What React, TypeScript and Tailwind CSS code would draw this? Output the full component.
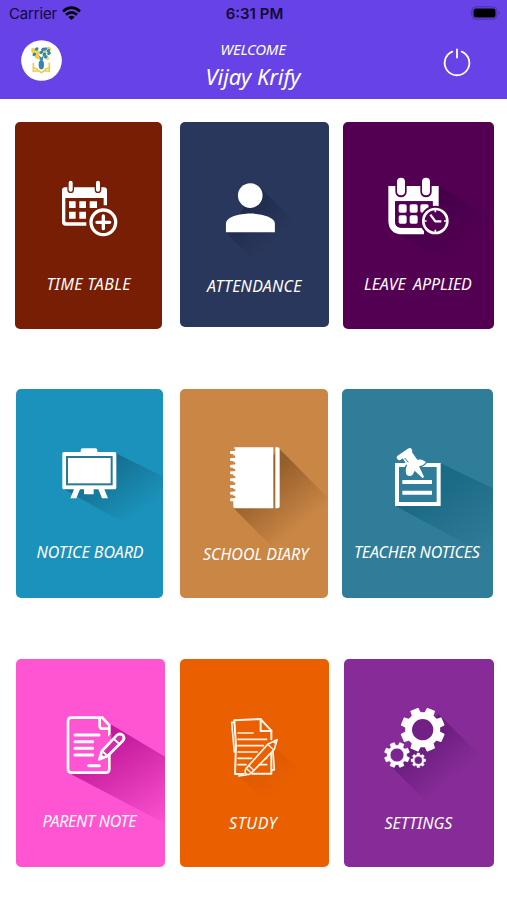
import type { ReactNode } from "react";

type Tile = {
  label: string;
  card: string;
  text: string;
  viewBox: string;
  art: ReactNode;
};

type GearProps = {
  cx: number;
  cy: number;
  outer: number;
  root: number;
  hole: number;
  turn?: number;
};

function Gear({ cx, cy, outer, root, hole, turn = 0 }: GearProps) {
  const teeth = 8;
  const at = (radius: number, angle: number) => {
    const rad = ((angle + turn) * Math.PI) / 180;
    return `${(cx + radius * Math.cos(rad)).toFixed(1)} ${(cy + radius * Math.sin(rad)).toFixed(1)}`;
  };

  const points: string[] = [];
  for (let i = 0; i < teeth; i++) {
    const mid = (360 / teeth) * i;
    points.push(at(root, mid - 14), at(outer, mid - 10), at(outer, mid + 10), at(root, mid + 14));
  }

  const ring = `M${cx - hole} ${cy}a${hole} ${hole} 0 1 0 ${hole * 2} 0a${hole} ${hole} 0 1 0 ${-hole * 2} 0Z`;

  return (
    <path
      d={`M${points.join("L")}Z${ring}`}
      fill="white"
      fillRule="evenodd"
      stroke="white"
      strokeWidth={outer / 16}
      strokeLinejoin="round"
    />
  );
}

type ShadeProps = {
  id: string;
  points: string;
  color: string;
  from: [number, number];
  to: [number, number];
  opacity?: number;
};

// long shadow that fades out between two points of the card
function Shade({ id, points, color, from, to, opacity = 1 }: ShadeProps) {
  return (
    <>
      <defs>
        <linearGradient id={id} gradientUnits="userSpaceOnUse" x1={from[0]} y1={from[1]} x2={to[0]} y2={to[1]}>
          <stop offset="0" stopColor={color} stopOpacity={opacity} />
          <stop offset="1" stopColor={color} stopOpacity="0" />
        </linearGradient>
      </defs>
      <polygon points={points} fill={`url(#${id})`} />
    </>
  );
}

const timeTable = (
  <>
    <path d="M170 216H287Q296 216 296 225V270H286V248H171V317Q171 321 175 321H234V331H172Q161 331 161 320V225Q161 216 170 216Z" fill="white" />
    {[187, 269].map((x) => (
      <rect key={x} x={x - 8} y="194" width="16" height="37" rx="8" fill="white" stroke="#771e04" strokeWidth="4" />
    ))}
    <path d="M182 258h20v20h-20zM213 258h20v20h-20zM244 258h22v20h-22zM182 289h20v21h-20zM213 289h20v21h-20z" fill="white" />
    <circle cx="285" cy="321" r="47" fill="#771e04" />
    <circle cx="285" cy="321" r="37" fill="none" stroke="white" strokeWidth="10" />
    <path d="M285 302V340M266 321H304" stroke="white" strokeWidth="10" strokeLinecap="round" />
  </>
);

const attendance = (
  <>
    <Shade id="attendance" points="262,215 400,350 345,480 290,480 162,352 200,300" color="#1c2748" opacity={0.7} from={[235, 280]} to={[320, 365]} />
    <circle cx="235" cy="241" r="37" fill="white" />
    <path d="M162 351V325C162 306 202 295 235 295S309 306 309 325V351Z" fill="white" />
  </>
);

const leaveApplied = (
  <>
    <Shade id="leave" points="308,212 473,305 473,500 440,490 180,353" color="#3c0042" opacity={0.7} from={[250, 250]} to={[400, 400]} />
    <path d="M158 212H309V300H291V258H178V318Q178 337 197 337H265V357H191Q158 351 158 315Z" fill="white" />
    {[196, 271].map((x) => (
      <g key={x}>
        <path d={`M${x - 17} 211V229a17 17 0 0 0 34 0V211Z`} fill="#530053" />
        <rect x={x - 12} y="187" width="24" height="53" rx="12" fill="white" />
      </g>
    ))}
    <path d="M178 258H291V320H265V337H197Q178 337 178 318Z" fill="#530053" />
    <g fill="white">
      <rect x="189" y="267" width="24" height="25" rx="5" />
      <rect x="222" y="267" width="24" height="25" rx="5" />
      <rect x="254" y="267" width="25" height="25" rx="5" />
      <rect x="189" y="300" width="24" height="25" rx="5" />
      <rect x="222" y="300" width="24" height="25" rx="5" />
    </g>
    <circle cx="299" cy="317" r="46" fill="#530053" />
    <circle cx="299" cy="317" r="36" fill="none" stroke="white" strokeWidth="8" />
    <path d="M299 284V291M299 343V350M266 317H273M325 317H332" stroke="white" strokeWidth="5" />
    <path d="M284 298L299 318H317" fill="none" stroke="white" strokeWidth="7" strokeLinejoin="round" />
  </>
);

const noticeBoard = (
  <>
    <Shade id="board" points="323,210 465,280 465,460 420,460 162,315" color="#136585" opacity={0.85} from={[250, 250]} to={[365, 410]} />
    <path d="M217 206V200Q217 195 223 195H261Q267 195 267 200V206H319Q324 206 324 211V313Q324 318 319 318H288L299 345H281L270 318H256V333H227V318H215L204 345H186L197 318H167Q162 318 162 313V211Q162 206 167 206Z" fill="white" />
    <rect x="176" y="221" width="134" height="82" fill="white" stroke="#267a96" strokeWidth="6" />
  </>
);

const schoolDiary = (
  <>
    <Shade id="diary" points="320,194 465,340 465,560 370,560 188,378" color="#8c5826" opacity={0.85} from={[270, 290]} to={[385, 430]} />
    <path d="M190 192H304V375H190Q184 375 184 369V198Q184 192 190 192Z" fill="white" />
    <path d="M310 192H317Q323 192 323 198V369Q323 375 317 375H310Z" fill="white" />
    {[208, 229, 249, 269, 290, 310, 330, 350].map((y) => (
      <g key={y}>
        <circle cx="186" cy={y - 9} r="4" fill="#ca8645" />
        <rect x="174" y={y - 5} width="16" height="9" rx="4" fill="white" />
      </g>
    ))}
  </>
);

const teacherNotices = (
  <>
    <Shade id="teacher" points="314,240 470,315 470,525 178,368" color="#176680" opacity={0.8} from={[310, 320]} to={[440, 520]} />
    <rect x="183" y="245" width="125" height="117" fill="#307d9a" stroke="white" strokeWidth="12" />
    <path d="M199 296H288M199 328H288" stroke="white" strokeWidth="12" />
    <path d="M211 250Q228 226 258 229L270 236Q262 247 249 249L264 280L260 285L236 262L230 274Q222 281 213 276Q207 268 211 250Z" fill="white" stroke="#307d9a" strokeWidth="8" paintOrder="stroke" />
    <path d="M199 222L227 205L246 232L217 254Z" fill="white" />
    <path d="M190 223L221 202" stroke="white" strokeWidth="15" strokeLinecap="round" />
    <path d="M206 224L217 237" stroke="#307d9a" strokeWidth="3" />
  </>
);

const parentNote = (
  <>
    <Shade id="parent" points="306,217 470,315 470,515 190,368" color="#bd1496" opacity={0.9} from={[290, 280]} to={[450, 540]} />
    <path d="M188 197H281L302 220V351Q302 362 291 362H189Q178 362 178 351V207Q178 197 188 197Z" fill="#ff55d2" stroke="white" strokeWidth="8" />
    <path d="M273 198V222Q273 230 281 230H302" fill="none" stroke="white" strokeWidth="8" />
    <path d="M199 249H271M199 269H252M199 289H252M199 309H252M240 341H272" stroke="white" strokeWidth="9" strokeLinecap="round" />
    <path d="M298 262L302 258V304L298 308Z" fill="#ff55d2" stroke="#ff55d2" strokeWidth="12" />
    <path d="M272 322L280 297L324 250Q334 242 343 250Q350 259 342 267L297 312Z" fill="#d42dab" stroke="white" strokeWidth="8" strokeLinejoin="round" />
    <path d="M315 260L333 277M280 297L297 312" stroke="white" strokeWidth="6" />
    <path d="M272 322L276 308L286 316Z" fill="white" stroke="white" strokeWidth="4" />
  </>
);

const study = (
  <>
    <Shade id="study" points="300,280 430,390 400,470 300,470 200,372" color="#c94f00" opacity={0.4} from={[250, 330]} to={[320, 420]} />
    <path d="M187 205L265 201L298 236V365H190Z" fill="#ea6000" />
    <g fill="none" stroke="#fff4ea" strokeWidth="6" strokeLinejoin="round" strokeLinecap="round">
      <path d="M298 292V365H240M215 366H189L192 280L187 205L265 201L298 236V262" />
      <path d="M266 202V237H298" />
      <path d="M186 211H179L187 300M302 286L307 353L300 355M200 372L222 369" strokeWidth="5" />
      <path d="M198 243H243M198 262H284M198 281H274M198 300H256M198 319H239M198 338H222M270 319H284M253 338H284" strokeWidth="5" />
      <path d="M222 350L287 277L315 263L307 292L238 363Q227 373 220 363Q218 356 222 350Z" fill="#ea6000" strokeWidth="5" />
      <path d="M287 277L303 292M224 350L238 363M232 342L245 355" strokeWidth="4" />
      <path d="M315 263L303 269L309 274Z" fill="#fff4ea" strokeWidth="3" />
    </g>
  </>
);

const settings = (
  <>
    <Shade id="settings" points="305,185 440,320 440,480 300,480 165,345" color="#5c1770" opacity={0.7} from={[240, 280]} to={[335, 390]} />
    <circle cx="258" cy="233" r="35" fill="#722084" />
    <Gear cx={258} cy={233} outer={65} root={51} hole={34} turn={22.5} />
    <circle cx="181" cy="309" r="22" fill="#7c248f" />
    <Gear cx={181} cy={309} outer={38} root={29} hole={21} turn={22.5} />
    <Gear cx={245} cy={325} outer={22} root={17} hole={12} />
  </>
);

const rows: { className: string; tiles: Tile[] }[] = [
  {
    className: "h-[267px]",
    tiles: [
      { label: "TIME TABLE", card: "ml-[14.5px] w-[147.5px] h-[207px] bg-[#771e04]", text: "pl-[32px] tracking-[0.35px]", viewBox: "20 20 442 450", art: timeTable },
      { label: "ATTENDANCE", card: "ml-[18px] w-[148.5px] h-[204.5px] bg-[#2a375c]", text: "pl-[27px] pt-[1.5px] tracking-[0.25px]", viewBox: "24 20 446 450", art: attendance },
      { label: "LEAVE APPLIED", card: "ml-[14.5px] w-[150.5px] h-[207px] bg-[#530053]", text: "pl-[21px] [word-spacing:3px]", viewBox: "22 20 451 450", art: leaveApplied },
    ],
  },
  {
    className: "h-[270px]",
    tiles: [
      { label: "NOTICE BOARD", card: "ml-[15.5px] w-[147.5px] h-[209px] bg-[#1b92bb]", text: "pl-[21px] pt-px", viewBox: "23 17 442 450", art: noticeBoard },
      { label: "SCHOOL DIARY", card: "ml-[17px] w-[147.5px] h-[209px] bg-[#ca8645]", text: "pl-[23px] pt-[2.5px]", viewBox: "24 17 442 450", art: schoolDiary },
      { label: "TEACHER NOTICES", card: "ml-[14.5px] w-[150.5px] h-[209px] bg-[#307d9a]", text: "pl-[12px] pt-px tracking-[-0.15px]", viewBox: "18 17 451 450", art: teacherNotices },
    ],
  },
  {
    className: "h-[208px]",
    tiles: [
      { label: "PARENT NOTE", card: "ml-[15.5px] w-[149px] h-[208px] bg-[#ff55d2]", text: "pl-[27px] tracking-[-0.28px]", viewBox: "22 21 447 450", art: parentNote },
      { label: "STUDY", card: "ml-[15.5px] w-[149px] h-[208px] bg-[#ea6000]", text: "pl-[49px] pt-[2px] tracking-[0.6px]", viewBox: "24 21 447 450", art: study },
      { label: "SETTINGS", card: "ml-[14.5px] w-[150.5px] h-[208px] bg-[#862b98]", text: "pl-[41px] pt-[2px]", viewBox: "22 21 451 450", art: settings },
    ],
  },
];

function StatusBar() {
  return (
    <div className="grid h-7 grid-cols-3 items-center pl-[9px] pr-[7px] font-['Inter',sans-serif] text-[15px] text-[#120b33]">
      <div className="flex items-center gap-1.5">
        <span className="w-[47px] tracking-[-0.15px]">Carrier</span>
        <svg className="mb-0.5 h-[15px] w-[19px]" viewBox="0 0 19 15" fill="none" stroke="black" strokeWidth="2.7">
          <path d="M1 5.4Q9.500 -2.100 18 5.400M4 8.700Q9.500 4 15 8.700" />
          <path d="M9.500 14L6.300 11Q9.500 8.500 12.700 11Z" fill="black" stroke="none" />
        </svg>
      </div>
      <span className="text-center font-semibold">6:31 PM</span>
      <svg className="mb-0.5 h-[14px] w-[29px] justify-self-end" viewBox="0 0 29 14">
        <rect x="0.800" y="0.800" width="25" height="12.400" rx="4" fill="none" stroke="#4a30a8" />
        <rect x="2.500" y="2.500" width="22" height="9" rx="2.500" fill="black" />
        <path d="M27.500 4.800Q29.500 7 27.500 9.200Z" fill="#4a30a8" />
      </svg>
    </div>
  );
}

function SchoolLogo() {
  return (
    <svg className="h-[41px] w-[41px]" viewBox="64 120 123 123">
      <circle cx="125.500" cy="181.500" r="61" fill="white" />
      <g fill="#f0d04b">
        {[[101, 155], [115, 156], [110, 170], [117, 173], [134, 157], [148, 146], [101, 149], [142, 174], [113, 163]].map(([x, y]) => (
          <ellipse key={`${x}-${y}`} cx={x} cy={y} rx="7" ry="5" transform={`rotate(35 ${x} ${y})`} />
        ))}
      </g>
      <g fill="#3385ab">
        <ellipse cx="125" cy="194" rx="8" ry="14" />
        <path d="M122 181L118 166L125 173L133 165L129 181Z" />
        {[[111, 147], [125, 157], [137, 147], [148, 160], [138, 170], [104, 163], [130, 148], [146, 152], [134, 163]].map(([x, y]) => (
          <ellipse key={`${x}-${y}`} cx={x} cy={y} rx="6" ry="4.500" transform={`rotate(-35 ${x} ${y})`} />
        ))}
      </g>
      <path d="M101 188V217M149 188V217M100 213H119L125 218L132 213H151M103 203L116 209M147 203L134 209" fill="none" stroke="#f2c94c" strokeWidth="5" />
    </svg>
  );
}

function Header() {
  return (
    <header className="h-[98.5px] bg-[#6742e7]">
      <StatusBar />
      <div className="grid h-[70px] grid-cols-[60px_1fr_60px] pl-[21px] pr-[20px] text-white">
        <div className="pt-3">
          <SchoolLogo />
        </div>
        <div className="flex flex-col items-center pt-[11px] pr-[2px] font-['Noto_Sans','Open_Sans',sans-serif] italic">
          <span className="text-[15px] leading-5 tracking-[-0.25px]">WELCOME</span>
          <span className="mt-[3px] text-[22px] leading-7 tracking-[-0.1px]">Vijay Krify</span>
        </div>
        <svg className="mt-[19px] ml-[15px] h-[30px] w-[30px]" viewBox="0 0 30 30" fill="none" stroke="white" strokeWidth="1.800" strokeLinecap="round">
          <path d="M10.300 4.600A12.300 12.300 0 1 0 19.700 4.600M15 2.500V10.500" />
        </svg>
      </div>
    </header>
  );
}

export default function App() {
  return (
    <div className="h-[900px] w-[507px] overflow-hidden bg-white">
      <Header />
      <main className="pt-[23.5px]">
        {rows.map((row) => (
          <div key={row.className} className={`flex items-start ${row.className}`}>
            {row.tiles.map((tile) => (
              <button
                key={tile.label}
                className={`flex shrink-0 flex-col justify-start overflow-hidden rounded-[5px] text-left ${tile.card}`}
              >
                <svg className="h-[150px] w-full shrink-0 overflow-visible" viewBox={tile.viewBox} preserveAspectRatio="xMinYMin meet">
                  {tile.art}
                </svg>
                <span className={`z-10 whitespace-nowrap font-['Noto_Sans','Open_Sans',sans-serif] text-base leading-6 text-white italic ${tile.text}`}>
                  {tile.label}
                </span>
              </button>
            ))}
          </div>
        ))}
      </main>
    </div>
  );
}
